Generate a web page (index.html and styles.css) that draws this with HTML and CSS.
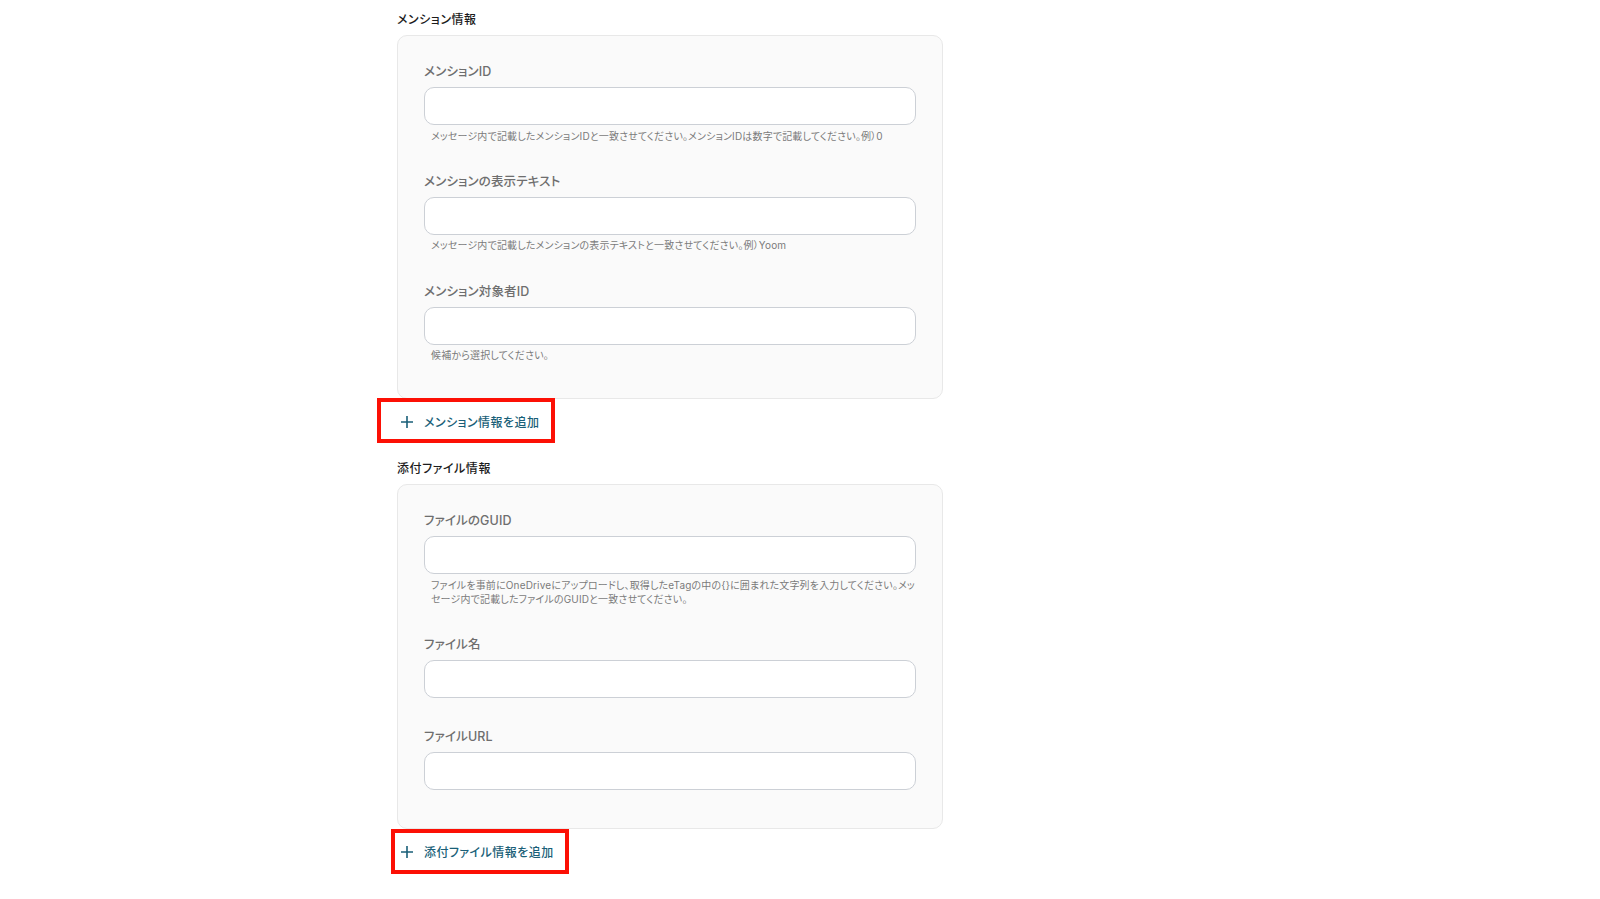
FILE: index.html
```html
<!DOCTYPE html>
<html lang="ja">
<head>
<meta charset="utf-8">
<title>メンション情報</title>
<link rel="stylesheet" href="styles.css">
</head>
<body>
<main class="form">
  <section class="group">
    <h2 class="group-title">メンション情報</h2>
    <div class="panel panel-mention">
      <div class="field">
        <label class="label">メンションID</label>
        <div class="input"></div>
        <p class="hint">メッセージ内で記載したメンションIDと一致させてください。メンションIDは数字で記載してください。例）0</p>
      </div>
      <div class="field">
        <label class="label">メンションの表示テキスト</label>
        <div class="input"></div>
        <p class="hint">メッセージ内で記載したメンションの表示テキストと一致させてください。例）Yoom</p>
      </div>
      <div class="field">
        <label class="label">メンション対象者ID</label>
        <div class="input"></div>
        <p class="hint">候補から選択してください。</p>
      </div>
    </div>
    <div class="add">
      <svg class="plus" viewBox="0 0 14 14" width="14" height="14"><path d="M7 1v12M1 7h12"/></svg>
      <span class="add-text">メンション情報を追加</span>
      <span class="mark mark-mention"></span>
    </div>
  </section>
  <section class="group">
    <h2 class="group-title">添付ファイル情報</h2>
    <div class="panel panel-file">
      <div class="field">
        <label class="label">ファイルのGUID</label>
        <div class="input"></div>
        <p class="hint">ファイルを事前にOneDriveにアップロードし、取得したeTagの中の{}に囲まれた文字列を入力してください。メッセージ内で記載したファイルのGUIDと一致させてください。</p>
      </div>
      <div class="field">
        <label class="label">ファイル名</label>
        <div class="input"></div>
      </div>
      <div class="field">
        <label class="label">ファイルURL</label>
        <div class="input"></div>
      </div>
    </div>
    <div class="add">
      <svg class="plus" viewBox="0 0 14 14" width="14" height="14"><path d="M7 1v12M1 7h12"/></svg>
      <span class="add-text">添付ファイル情報を追加</span>
      <span class="mark mark-file"></span>
    </div>
  </section>
</main>
</body>
</html>
```
FILE: styles.css
```css
* { box-sizing: border-box; }
html, body { margin: 0; background: #fff; }
body {
  height: 899px;
  overflow: hidden;
  font-family: Inter, "Noto Sans CJK JP", sans-serif;
  font-feature-settings: "palt";
}
.form {
  width: 546px;
  margin-left: 397px;
  padding-top: 12px;
  display: flex;
  flex-direction: column;
  gap: 17px;
}
.group { display: flex; flex-direction: column; }
.group-title {
  margin: 0 0 7px;
  height: 16px;
  font-size: 12px;
  line-height: 16px;
  font-weight: 500;
  letter-spacing: 0.55px;
  color: #1c1c1c;
}
.panel {
  background: #fafafa;
  border: 1px solid #e8e8e8;
  border-radius: 10px;
  padding: 27px 26px 26px;
  display: flex;
  flex-direction: column;
  gap: 30px;
}
.panel-mention { height: 364px; }
.panel-file { height: 345px; }
.field { display: flex; flex-direction: column; }
.label {
  height: 18px;
  font-size: 12.5px;
  line-height: 18px;
  font-weight: 500;
  letter-spacing: 0.15px;
  color: #6e6e6e;
  margin-bottom: 6px;
}
.input {
  height: 38px;
  background: #fff;
  border: 1px solid #ccd0d6;
  border-radius: 10px;
}
.hint {
  margin: 3.5px 0 0;
  padding: 0 0 0 7px;
  font-size: 10px;
  line-height: 14.4px;
  letter-spacing: 0.16px;
  color: #7a7a7a;
}
.add {
  position: relative;
  display: flex;
  align-items: center;
  height: 45px;
  padding-left: 3px;
}
.plus { fill: none; stroke: #1a5f78; stroke-width: 1.6; }
.add-text {
  margin-left: 10px;
  font-size: 12px;
  font-weight: 500;
  letter-spacing: 0.45px;
  color: #1a5f78;
}
.mark {
  position: absolute;
  top: -1px;
  height: 45px;
  width: 178px;
  border: 4px solid #fc1005;
}
.mark-mention { left: -20px; }
.mark-file { left: -6px; top: 0; }
```
